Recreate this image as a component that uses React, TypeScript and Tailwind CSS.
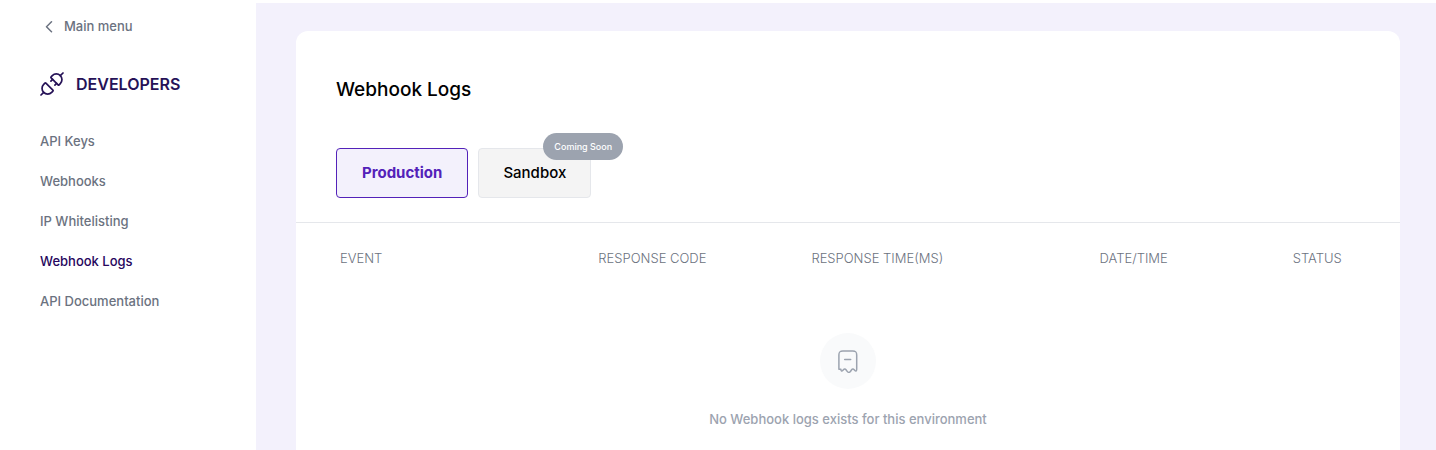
import { useState } from "react";

const navItems = ["API Keys", "Webhooks", "IP Whitelisting", "Webhook Logs", "API Documentation"];

const columns = [
  { label: "EVENT", width: "w-[23.4%]" },
  { label: "RESPONSE CODE", width: "w-[19.3%]" },
  { label: "RESPONSE TIME(MS)", width: "w-[26.1%]" },
  { label: "DATE/TIME", width: "w-[17.5%]" },
  { label: "STATUS", width: "w-[13.7%]" },
];

function PlugIcon() {
  return (
    <svg
      className="size-6"
      viewBox="0 0 24 24"
      fill="none"
      stroke="currentColor"
      strokeWidth="1.7"
      strokeLinecap="round"
      strokeLinejoin="round"
      aria-hidden="true"
    >
      <path d="M1 23l2.700-2.700" />
      <path d="M5.900 11.100l7 7q.5.500 0 1.100l-1.200 1.200a5.650 5.650 0 0 1-8-8l1.200-1.300q.5-.5 1 0Z" />
      <path d="M20.300 3.700L23 1" />
      <path d="M18.100 12.900l-7-7q-.5-.5 0-1.100l1.200-1.200a5.650 5.650 0 0 1 8 8l-1.200 1.300q-.5.500-1 0Z" />
      <path d="M12.600 7.400l-1.700 1.700M16.600 11.400l-1.700 1.700" />
    </svg>
  );
}

function ReceiptIcon() {
  return (
    <svg
      className="size-6"
      viewBox="0 0 24 24"
      fill="none"
      stroke="currentColor"
      strokeWidth="1.5"
      strokeLinecap="round"
      strokeLinejoin="round"
      aria-hidden="true"
    >
      <path d="M2.700 20V5.800C2.700 2.500 3.500 1.700 6.700 1.700h9.800c3.200 0 4 .8 4 4.100V20c0 2-.9 2.200-2.100 1l-.4-.6c-.8-.9-1.900-.8-2.600.1l-1 1.400c-1.100 1.600-2.500 1.600-3.600 0l-1-1.400c-.7-.9-1.800-1-2.600-.1l-.4.600c-1.200 1.200-2.100 1-2.100-1Z" transform="translate(0.200 0.300)" />
      <path d="M8.700 10.500h6" />
    </svg>
  );
}

export default function App() {
  const [active, setActive] = useState("Webhook Logs");

  return (
    <div className="flex min-h-screen bg-white font-['Inter',sans-serif]">
      <aside className="w-64 shrink-0 px-10 pt-[17px]">
        <a href="#main" className="flex h-5 items-center gap-2 text-[13px] font-medium text-[#6b7280]">
          <svg
            className="ml-1 h-3 w-3"
            viewBox="0 0 12 12"
            fill="none"
            stroke="currentColor"
            strokeWidth="1.5"
            strokeLinecap="round"
            strokeLinejoin="round"
            aria-hidden="true"
          >
            <path d="M7.500 0.800L2.500 5.800l5 5" />
          </svg>
          Main menu
        </a>
        <div className="mt-[35px] flex h-6 items-center gap-3 text-[#261257]">
          <PlugIcon />
          <h2 className="text-base font-semibold">DEVELOPERS</h2>
        </div>
        <nav className="mt-[26px] flex flex-col">
          {navItems.map((item) => (
            <a
              key={item}
              href="#nav"
              onClick={() => setActive(item)}
              className={
                "flex h-10 items-center text-[13px] font-medium whitespace-nowrap " +
                (item === active ? "text-[#26065d]" : "text-[#6b7280]")
              }
            >
              {item}
            </a>
          ))}
        </nav>
      </aside>

      <main className="mt-[3px] flex min-w-0 flex-1 flex-col bg-[#f3f1fc] pt-7 pr-9 pl-10">
        <section className="flex-1 rounded-t-xl bg-white">
          <header className="border-b border-[#e5e7eb] px-10 pt-[45px] pb-6">
            <h1 className="text-[19px] leading-7 font-medium text-black">Webhook Logs</h1>
            <div className="mt-11 flex gap-[10px]">
              <button
                type="button"
                className="h-[50px] rounded border border-[#5322b9] bg-[#f3f1fc] px-[25px] text-[15px] font-bold text-[#5322b9]"
              >
                Production
              </button>
              <button
                type="button"
                className="relative h-[50px] rounded border border-[#e5e7eb] bg-[#f4f4f4] px-6 text-[15px] font-medium text-black"
              >
                Sandbox
                <span className="absolute -top-4 -right-[33px] flex h-[27px] w-20 items-center justify-center rounded-full bg-[#9ca3af] text-[9px] font-medium whitespace-nowrap text-white">
                  Coming Soon
                </span>
              </button>
            </div>
          </header>

          <table className="w-full table-fixed">
            <thead>
              <tr>
                {columns.map((column) => (
                  <th
                    key={column.label}
                    scope="col"
                    className={"h-[72px] pl-11 text-left text-[13px] font-light whitespace-nowrap text-[#6b7280] " + column.width}
                  >
                    {column.label}
                  </th>
                ))}
              </tr>
            </thead>
            <tbody>
              <tr>
                <td colSpan={columns.length} className="pt-[38px]">
                  <div className="flex flex-col items-center">
                    <div className="flex size-14 items-center justify-center rounded-full bg-[#f9fafb] text-[#9ca3af]">
                      <ReceiptIcon />
                    </div>
                    <p className="mt-5 text-[13px] leading-5 font-medium text-[#9ca3af]">
                      No Webhook logs exists for this environment
                    </p>
                  </div>
                </td>
              </tr>
            </tbody>
          </table>
        </section>
      </main>
    </div>
  );
}
